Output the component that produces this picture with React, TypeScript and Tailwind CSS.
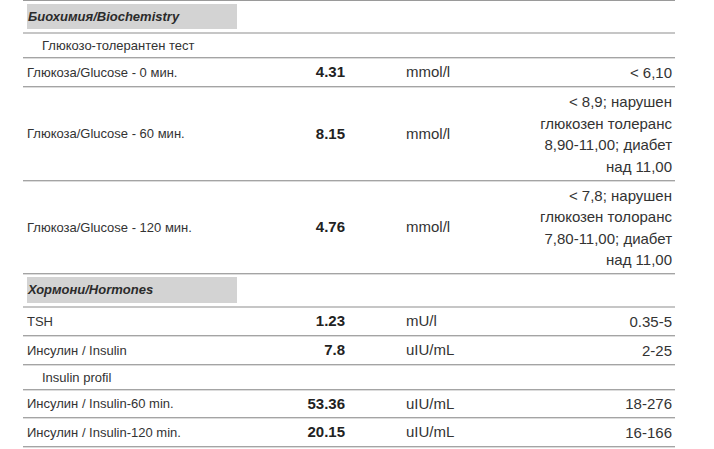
const font = { fontFamily: '"Liberation Sans", Arial, sans-serif' };

type Row =
  | { kind: "section"; title: string; h: string; box: string }
  | { kind: "sub"; title: string; h: string }
  | { kind: "data"; name: string; value: string; unit: string; range: string[]; h: string };

const rows: Row[] = [
  { kind: "section", title: "Биохимия/Biochemistry", h: "h-[31px]", box: "mt-[3px] h-[25px]" },
  { kind: "sub", title: "Глюкозо-толерантен тест", h: "h-[24px]" },
  { kind: "data", name: "Глюкоза/Glucose - 0 мин.", value: "4.31", unit: "mmol/l", range: ["< 6,10"], h: "h-[28px]" },
  {
    kind: "data",
    name: "Глюкоза/Glucose - 60 мин.",
    value: "8.15",
    unit: "mmol/l",
    range: ["< 8,9; нарушен", "глюкозен толеранс", "8,90-11,00; диабет", "над 11,00"],
    h: "h-[93px]",
  },
  {
    kind: "data",
    name: "Глюкоза/Glucose - 120 мин.",
    value: "4.76",
    unit: "mmol/l",
    range: ["< 7,8; нарушен", "глюкозен толоранс", "7,80-11,00; диабет", "над 11,00"],
    h: "h-[92px]",
  },
  { kind: "section", title: "Хормони/Hormones", h: "h-[31px]", box: "mt-[2px] h-[26px]" },
  { kind: "data", name: "TSH", value: "1.23", unit: "mU/l", range: ["0.35-5"], h: "h-[28px]" },
  { kind: "data", name: "Инсулин / Insulin", value: "7.8", unit: "uIU/mL", range: ["2-25"], h: "h-[28px]" },
  { kind: "sub", title: "Insulin profil", h: "h-[24px]" },
  { kind: "data", name: "Инсулин / Insulin-60 min.", value: "53.36", unit: "uIU/mL", range: ["18-276"], h: "h-[27px]" },
  { kind: "data", name: "Инсулин / Insulin-120 min.", value: "20.15", unit: "uIU/mL", range: ["16-166"], h: "h-[28px]" },
];

const cols = "grid grid-cols-[226px_100px_54px_109px_163px]";

function ResultRow({ row }: { row: Row }) {
  if (row.kind === "section") {
    return (
      <div className="border-b-2 border-[#c6c6c6]">
        <div className={`${cols} ${row.h} items-start`}>
          <div className={`col-span-2 ml-[4px] w-[210px] ${row.box} bg-[#d3d3d3] flex items-center pl-[1px]`}>
            <span className="text-[13px] font-bold italic text-[#2b2b2b]">{row.title}</span>
          </div>
        </div>
      </div>
    );
  }
  if (row.kind === "sub") {
    return (
      <div className="border-b border-[#dcdcdc]">
        <div className={`${cols} ${row.h} items-center border-b border-[#a4a4a4]`}>
          <div className="col-span-2 pl-[19px] text-[13px] text-[#333]">{row.title}</div>
        </div>
      </div>
    );
  }
  return (
    <div className="border-b border-[#dcdcdc]">
      <div className={`${cols} ${row.h} items-center border-b border-[#a4a4a4] text-[#333]`}>
        <div className="pl-[4px] text-[13px]">{row.name}</div>
        <div className="pr-[4px] text-right text-[15px] font-bold text-[#222]">{row.value}</div>
        <div />
        <div className="pl-[3px] text-[15px]">{row.unit}</div>
        <div className="pr-[3px] text-right text-[15px] leading-[21.5px]">
          {row.range.map((line, i) => (
            <div key={i}>{line}</div>
          ))}
        </div>
      </div>
    </div>
  );
}

export default function App() {
  return (
    <div className="w-[714px] h-[449px] bg-white overflow-hidden" style={font}>
      <div className="ml-[23px] w-[652px] border-t border-[#9a9a9a]">
        {rows.map((row, i) => (
          <ResultRow key={i} row={row} />
        ))}
      </div>
    </div>
  );
}
